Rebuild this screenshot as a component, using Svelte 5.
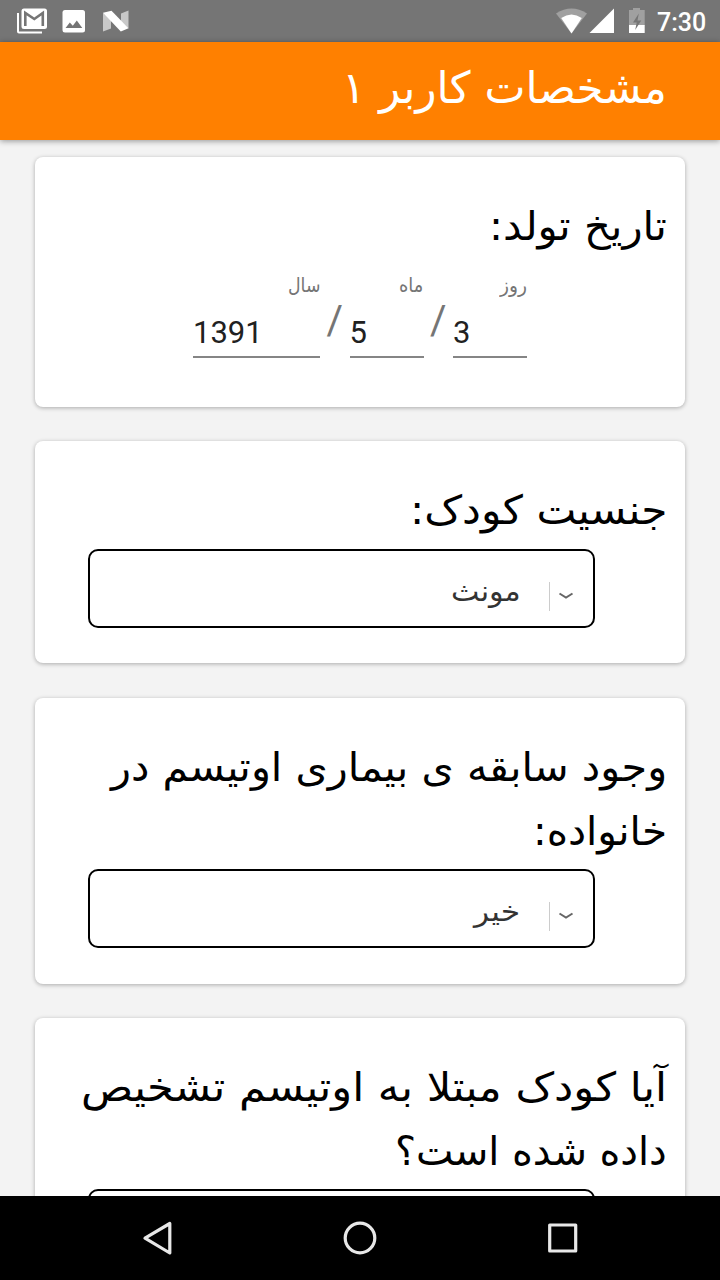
<script>
  const cards = [
    {
      height: 250,
      lines: [{ text: 'تاریخ تولد:', width: 178 }],
      date: [
        { label: 'روز', labelWidth: 27, value: '3', width: 74 },
        { label: 'ماه', labelWidth: 24, value: '5', width: 74 },
        { label: 'سال', labelWidth: 32, value: '1391', width: 127 }
      ]
    },
    {
      height: 222,
      lines: [{ text: 'جنسیت کودک:', width: 257 }],
      choice: { text: 'مونث', width: 70 }
    },
    {
      height: 286,
      lines: [
        { text: 'وجود سابقه ی بیماری اوتیسم در', width: 556 },
        { text: 'خانواده:', width: 134 }
      ],
      choice: { text: 'خیر', width: 46 }
    },
    {
      height: 286,
      lines: [
        { text: 'آیا کودک مبتلا به اوتیسم تشخیص', width: 586 },
        { text: 'داده شده است؟', width: 272 }
      ]
    }
  ];

  // Scales a run of text horizontally so it fills the given width.
  function fit(node, width) {
    const apply = () => {
      node.style.transform = `scaleX(${width / node.offsetWidth})`;
    };
    apply();
    document.fonts.ready.then(apply);
  }
</script>

<div class="screen">
  <div class="status">
    <svg width="140" height="42" viewBox="0 0 140 42">
      <path d="M18 13v18.500q0 1 1 1H42" fill="none" stroke="#fff" stroke-width="2" />
      <rect x="21.500" y="8.500" width="25.500" height="20.500" rx="2.500" fill="#fff" />
      <path d="M25.300 26V13l9 6 8.500-6V26" fill="none" stroke="#757575" stroke-width="2.600" />
      <rect x="62.500" y="10" width="22.500" height="22.500" rx="2.500" fill="#fff" />
      <path d="M65.500 28l4.300-5.500 3 3.200 4-5.200 5.500 7.500z" fill="#757575" />
      <path d="M103 12.700l8 6v9.800l-8 3zM128.500 10.500v18l-7.500-7v-8z" fill="#c8c8c8" />
      <path d="M103 12.700l8.500-2 17 17.500-7.700 3.200z" fill="#fff" />
    </svg>
    <div class="right">
      <svg width="100" height="42" viewBox="0 0 100 42">
        <path d="M6 13.500Q21.500 3.500 37 13.500L21.500 33.500z" fill="#a0a0a0" />
        <path d="M11.200 18Q21.500 11 31.800 18L21.500 33.500z" fill="#fff" />
        <path d="M64 8.500V33H39.500z" fill="#fff" />
        <path d="M79 10h4V8h7v2h4.700v15.500H79z" fill="#a0a0a0" />
        <path d="M79 25h15.700v8H79z" fill="#fff" />
        <path d="M88.800 13.500l-5.800 9h3.700l-1.500 7.500 6-9.500h-3.700z" fill="#757575" />
      </svg>
      <span class="clock">7:30</span>
    </div>
  </div>

  <header dir="rtl"><span class="fit" use:fit={325}>مشخصات کاربر ۱</span></header>

  <main>
    {#each cards as card}
      <section style:height="{card.height}px" dir="rtl">
        <div class="question">
          {#each card.lines as line}
            <div><span class="fit" use:fit={line.width}>{line.text}</span></div>
          {/each}
        </div>
        {#if card.date}
          <div class="date">
            {#each card.date as field, i}
              {#if i > 0}<span class="slash">/</span>{/if}
              <div class="field" style:width="{field.width}px">
                <div class="label"><span class="fit" use:fit={field.labelWidth}>{field.label}</span></div>
                <div class="value" dir="ltr">{field.value}</div>
              </div>
            {/each}
          </div>
        {:else}
          <div class="select">
            {#if card.choice}
              <svg width="16" height="10" viewBox="0 0 16 10">
                <path d="M1.500 2.500l6.500 4 6.500-4" fill="none" stroke="#666" stroke-width="2" />
              </svg>
              <i></i>
              <span class="fit" use:fit={card.choice.width}>{card.choice.text}</span>
            {/if}
          </div>
        {/if}
      </section>
    {/each}
  </main>

  <nav>
    <svg width="720" height="84" viewBox="0 0 720 84" fill="none" stroke="#e8e8e8" stroke-width="3.200" stroke-linejoin="round">
      <path d="M169.800 27.500v29.500L145 42.200z" />
      <circle cx="360" cy="42" r="14.800" />
      <rect x="549.700" y="29" width="26" height="26" />
    </svg>
  </nav>
</div>

<style>
  :global(body) { margin: 0; }
  .screen {
    width: 720px;
    height: 1280px;
    overflow: hidden;
    display: flex;
    flex-direction: column;
    background: #f3f3f3;
    font-family: Roboto, "DejaVu Sans", sans-serif;
  }
  svg { display: block; flex: none; }
  .fit { display: inline-block; white-space: nowrap; transform-origin: right center; font-family: "DejaVu Sans", sans-serif; }
  .status {
    flex: none;
    height: 42px;
    display: flex;
    justify-content: space-between;
    background: #757575;
  }
  .right { display: flex; width: 170px; }
  .clock { margin-left: 7px; font-size: 25px; font-weight: 500; line-height: 45px; color: #fff; }
  header {
    position: relative;
    flex: none;
    height: 98px;
    box-sizing: border-box;
    padding-right: 53px;
    font-size: 44px;
    line-height: 91px;
    color: #fff;
    background: #ff8000;
    box-shadow: 0 1px 6px rgba(0, 0, 0, 0.4);
  }
  main {
    flex: 1;
    min-height: 0;
    overflow: hidden;
    padding: 17px 35px 0;
    display: flex;
    flex-direction: column;
    gap: 34.300px;
  }
  section {
    flex: none;
    box-sizing: border-box;
    padding: 37px 18px 0;
    border-radius: 8px;
    background: #fff;
    box-shadow: 0 1px 4px rgba(0, 0, 0, 0.3);
  }
  .question { font-size: 40px; line-height: 64px; color: #000; }
  .question div { height: 64px; }
  .date { display: flex; padding-right: 140px; }
  .field { box-sizing: border-box; border-bottom: 2px solid #858585; height: 100px; }
  .label { height: 54px; font-size: 20px; line-height: 54px; color: #757575; }
  .value { font-size: 31px; line-height: 42px; color: #212121; }
  .slash { width: 29.500px; text-align: center; font-size: 40px; line-height: 125px; color: #757575; }
  .select {
    display: flex;
    align-items: center;
    box-sizing: border-box;
    width: 507px;
    height: 79px;
    margin: 6.400px 72px 0 0;
    padding: 0 19px 0 0;
    border: 2px solid #000;
    border-radius: 10px;
    font-size: 28px;
    color: #333;
  }
  .select svg { margin-top: 16px; }
  .select i { width: 1.500px; height: 29px; margin: 16px 8px 0 8px; background: #ccc; }
  .select .fit { margin: 6px 20px 0 0; }
  nav { flex: none; height: 84px; background: #000; }
</style>
